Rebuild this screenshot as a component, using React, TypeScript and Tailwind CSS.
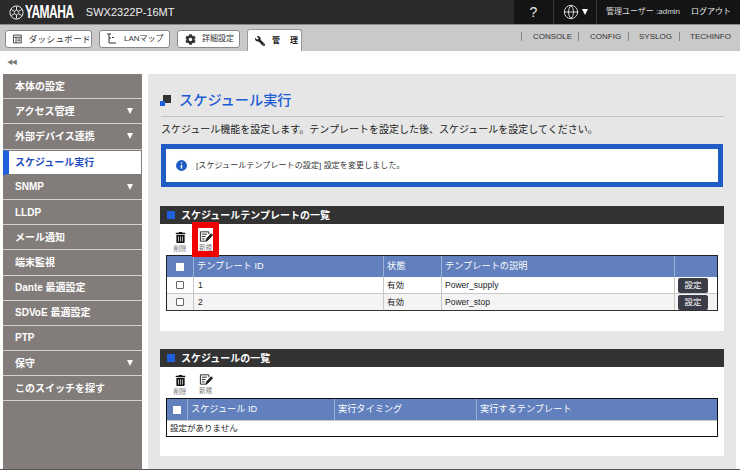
import { Globe, Info } from "lucide-react";
import { FaCog, FaTrashAlt, FaWrench } from "react-icons/fa";

const FONT = { fontFamily: '"Liberation Sans", "Noto Sans CJK JP", sans-serif' };

const MENU = [
  { label: "本体の設定" },
  { label: "アクセス管理", arrow: true },
  { label: "外部デバイス連携", arrow: true },
  { label: "スケジュール実行", active: true },
  { label: "SNMP", arrow: true },
  { label: "LLDP" },
  { label: "メール通知" },
  { label: "端末監視" },
  { label: "Dante 最適設定" },
  { label: "SDVoE 最適設定" },
  { label: "PTP" },
  { label: "保守", arrow: true },
  { label: "このスイッチを探す" },
];

function Arrow({ className = "border-t-white" }: { className?: string }) {
  return <span className={`w-0 h-0 border-x-[3.5px] border-x-transparent border-t-[6px] ${className}`} />;
}

function NewIcon() {
  return (
    <svg width="14" height="13" viewBox="0 0 15 13" fill="none" stroke="#222" strokeWidth="1">
      <path d="M8.5 11.5H1.5V1.5H10.5V4" />
      <path d="M3 4H8.5M3 6.5H7M3 9H6" />
      <path d="M7.5 11L8 9L13 3.5L14.5 5L9.5 10.500Z" fill="#222" />
    </svg>
  );
}

function Toolbar({ highlight }: { highlight?: boolean }) {
  return (
    <div className="flex h-[31px] pl-[10px] items-start">
      <div className="w-[20px] h-[31px] flex flex-col items-center pt-[8px]">
        <FaTrashAlt size={11} color="#111" />
        <span className="text-[6.5px] leading-[8px] mt-[2px] text-[#777]">削除</span>
      </div>
      <div className="relative ml-[2px] w-[27px] h-[31px] flex flex-col items-center pt-[6px]">
        <NewIcon />
        <span className="text-[6.5px] leading-[8px] mt-[1px] text-[#777]">新規</span>
        {highlight && (
          <span className="absolute left-0 top-[-2px] w-[27px] h-[35px] border-[6px] border-[#f00000]" />
        )}
      </div>
    </div>
  );
}

function SectionHeader({ title }: { title: string }) {
  return (
    <div className="h-[18px] bg-[#333333] flex items-center pl-[7px] gap-[6px] text-white text-[10px] font-bold">
      <span className="w-[8px] h-[8px] bg-[#1e5fdc]" />
      {title}
    </div>
  );
}

function Check({ header }: { header?: boolean }) {
  return (
    <span
      className={`block w-[8px] h-[8px] ${header ? "bg-white" : "bg-white border border-[#666] rounded-[1px]"}`}
    />
  );
}

function HeadCell({ className, children }: { className: string; children?: React.ReactNode }) {
  return (
    <div className={`h-full flex items-center pl-[3px] text-[9.2px] text-white border-r border-[#9db0d6] ${className}`}>
      {children}
    </div>
  );
}

function Row({ id, desc, shaded }: { id: string; desc: string; shaded?: boolean }) {
  const cell = "h-full flex items-center border-r border-[#c8c8c8]";
  return (
    <div className={`flex h-[17px] last:h-[16px] items-center text-[8.5px] text-[#222] ${shaded ? "bg-[#f4f4f4]" : "bg-white"} border-b border-[#c8c8c8] last:border-b-0`}>
      <div className={`${cell} w-[27px] justify-center`}>
        <Check />
      </div>
      <div className={`${cell} w-[190px] pl-[4px]`}>{id}</div>
      <div className={`${cell} w-[58px] pl-[3px]`}>有効</div>
      <div className={`${cell} w-[233px] pl-[3px]`}>{desc}</div>
      <div className="h-full flex-1 flex items-center pl-[3px]">
        <span className="w-[30px] h-[15px] bg-[#3a3d47] text-white text-[8.5px] rounded-[2px] flex items-center justify-center">
          設定
        </span>
      </div>
    </div>
  );
}

export default function App() {
  return (
    <div style={FONT} className="w-[740px] h-[470px] overflow-hidden bg-white flex flex-col border-b border-[#555]">
      <header className="h-[25px] shrink-0 bg-[#2b2b2b] border-b border-[#8a8a8a] flex items-stretch text-white">
        <div className="flex items-center pl-[9px] w-[514px]">
          <svg width="15" height="15" viewBox="0 0 15 15" fill="none" stroke="#e8e8e8">
            <circle cx="7.5" cy="7.500" r="6.600" strokeWidth="1" />
            <circle cx="7.5" cy="7.500" r="2.200" strokeWidth="0.8" />
            <path d="M7.5 1.5V5M7.5 10V13.5M2.3 4.5L5.5 6.3M9.5 8.7L12.700 10.500M2.3 10.500L5.5 8.700M9.5 6.300L12.700 4.500" strokeWidth="1" />
          </svg>
          <span className="ml-[1px] mr-[-12px] text-[15px] font-bold tracking-[-0.6px] scale-x-[0.8] scale-y-[1.2] origin-left">YAMAHA</span>
          <span className="ml-[12px] text-[11px] text-[#eeeeee]">SWX2322P-16MT</span>
        </div>
        <div className="flex-1 flex items-stretch bg-[#141414]">
          <div className="w-[40px] flex items-center justify-center text-[14px] text-[#e8e8e8] border-r border-[#3a3a3a]">?</div>
          <div className="w-[43px] flex items-center justify-center gap-[3px] border-r border-[#3a3a3a]">
            <Globe size={16} color="#eee" strokeWidth={1.3} />
            <Arrow />
          </div>
          <div className="flex items-center pl-[9px] text-[8px] text-[#dddddd]">管理ユーザー :admin</div>
          <div className="flex items-center ml-auto mr-[9px] text-[8px] text-[#eeeeee]">ログアウト</div>
        </div>
      </header>

      <nav className="h-[26px] shrink-0 bg-[#c9c9c9] flex items-end pl-[5px]">
        <div className="flex gap-[7px] h-[18px] items-start mb-[3px]">
          <div className="h-[18px] w-[87px] bg-white border border-[#888] rounded-[3px] flex items-center pl-[7px] gap-[7px] text-[8.5px] tracking-[0.4px] whitespace-nowrap text-[#333]">
            <svg width="10" height="10" viewBox="0 0 10 10" fill="none" stroke="#333">
              <path d="M.5.5h9v9h-9zM.5 3h9M3.5 3v6.5M5 5h3.5M5 7h3.5" />
            </svg>
            ダッシュボード
          </div>
          <div className="h-[18px] w-[71px] bg-white border border-[#888] rounded-[3px] flex items-center pl-[6px] gap-[7px] text-[8px] text-[#333]">
            <svg width="11" height="12" viewBox="0 0 11 12" fill="none" stroke="#333">
              <path d="M1 1h4M3 1v9M3 5h2M3 10h7M6 4.500h2" />
            </svg>
            LANマップ
          </div>
          <div className="h-[18px] w-[63px] bg-white border border-[#888] rounded-[3px] flex items-center pl-[7px] gap-[6px] text-[8px] text-[#333]">
            <FaCog size={11} color="#333" />
            詳細設定
          </div>
        </div>
        <div className="ml-[7px] w-[55px] h-[22px] bg-white border border-b-0 border-[#999] rounded-t-[3px] flex items-center pl-[7px] text-[8px] font-bold text-[#222]">
          <FaWrench size={10} color="#222" className="-scale-x-100" />
          <span className="ml-[7px]">管</span>
          <span className="ml-[10px]">理</span>
        </div>
        <div className="flex-1 flex justify-end items-center h-full text-[8px] text-[#333] pb-[4px]">
          <span className="w-[57px] h-[9px] border-l border-[#888] pl-[11px] leading-[9px]">CONSOLE</span>
          <span className="w-[50px] h-[9px] border-l border-[#888] pl-[11px] leading-[9px]">CONFIG</span>
          <span className="w-[51px] h-[9px] border-l border-[#888] pl-[10px] leading-[9px]">SYSLOG</span>
          <span className="w-[61px] h-[9px] border-l border-[#888] pl-[10px] leading-[9px]">TECHINFO</span>
        </div>
      </nav>

      <div className="h-[23px] shrink-0 flex items-center pl-[7px] text-[6px] text-[#777] tracking-[-1.5px]">◀◀</div>

      <div className="flex-1 flex min-h-0 pl-[3px]">
        <aside className="w-[139px] shrink-0 bg-[#827d7b]">
          {MENU.map((m) =>
            m.active ? (
              <div key={m.label} className="h-[25.2px] bg-white border-y border-r border-[#827d7b] border-l-[6px] border-l-[#1e5fdc] flex items-center pl-[6px] text-[10px] font-bold text-[#1f4fc0]">
                {m.label}
              </div>
            ) : (
              <div key={m.label} className="h-[25.2px] border-b border-[#d4d2d1] flex items-center justify-between pl-[12px] pr-[9px] text-[10px] font-bold text-white">
                {m.label}
                {m.arrow && <Arrow />}
              </div>
            ),
          )}
        </aside>

        <main className="ml-[6px] w-[588px] bg-[#e6e6e6] pl-[12px] pr-[12px]">
          <div className="h-[43px] ml-[1px] border-b border-[#c4c4c4] flex items-end pb-[7px]">
            <span className="relative -ml-[1px] w-[11px] h-[11px] mb-[3px]">
              <span className="absolute right-0 top-0 w-[8px] h-[8px] bg-[#333]" />
              <span className="absolute left-0 bottom-0 w-[5px] h-[5px] bg-[#1e5fdc]" />
            </span>
            <span className="ml-[8px] text-[14.2px] leading-[18px] font-medium text-[#1a5cd6]">スケジュール実行</span>
          </div>
          <p className="mt-[6px] ml-[1px] text-[10px] leading-[14px] text-[#222]">
            スケジュール機能を設定します。テンプレートを設定した後、スケジュールを設定してください。
          </p>
          <div className="mt-[7px] ml-[1px] w-[562px] h-[43px] border-[5px] border-[#1f5cc4] bg-white flex items-center pl-[8px] gap-[7px] text-[8px] tracking-[0.1px] text-[#333]">
            <Info size={15} color="white" fill="#1f5cc4" strokeWidth={2.5} />
            <span className="mt-[1px]">[スケジュールテンプレートの設定] 設定を変更しました。</span>
          </div>

          <section className="mt-[19px] bg-white h-[125px]">
            <SectionHeader title="スケジュールテンプレートの一覧" />
            <Toolbar highlight />
            <div className="mx-[6px] border border-[#222] border-b-[#333]">
              <div className="flex h-[21px] bg-[#6180bd]">
                <HeadCell className="w-[27px] justify-center !pl-0">
                  <Check header />
                </HeadCell>
                <HeadCell className="w-[190px]">テンプレート ID</HeadCell>
                <HeadCell className="w-[58px]">状態</HeadCell>
                <HeadCell className="w-[233px]">テンプレートの説明</HeadCell>
              </div>
              <Row id="1" desc="Power_supply" />
              <Row id="2" desc="Power_stop" shaded />
            </div>
          </section>

          <section className="mt-[18px] bg-white h-[107px]">
            <SectionHeader title="スケジュールの一覧" />
            <Toolbar />
            <div className="mx-[6px] border border-[#111]">
              <div className="flex h-[21px] bg-[#6180bd]">
                <HeadCell className="w-[21px] justify-center !pl-0">
                  <Check header />
                </HeadCell>
                <HeadCell className="w-[147px]">スケジュール ID</HeadCell>
                <HeadCell className="w-[142px]">実行タイミング</HeadCell>
                <HeadCell className="flex-1 !border-r-0">実行するテンプレート</HeadCell>
              </div>
              <div className="h-[16px] border-t border-[#c8c8c8] flex items-center pl-[3px] text-[8.5px] text-[#222]">設定がありません</div>
            </div>
          </section>
        </main>
      </div>
    </div>
  );
}
